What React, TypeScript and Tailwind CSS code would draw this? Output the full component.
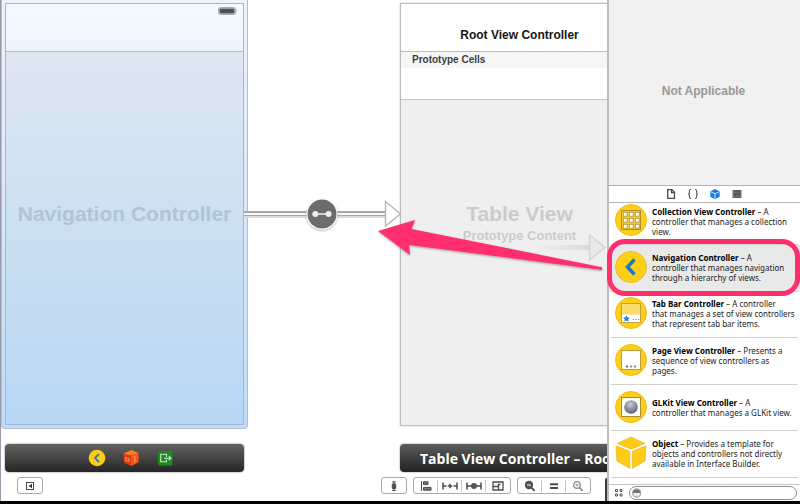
import React from 'react';

interface LibraryItem {
  id: string;
  title: string;
  description: string;
  icon: React.ReactNode;
}

const Disc: React.FC<{ children: React.ReactNode }> = ({ children }) => (
  <svg viewBox="0 0 32 32" className="size-8" aria-hidden="true">
    <circle cx="16" cy="16" r="15.5" fill="#fdd017" stroke="#eebb22" />
    {children}
  </svg>
);

const CollectionIcon = () => (
  <Disc>
    <rect x="6.5" y="6.5" width="19" height="19" fill="#e9c63c" stroke="#b08f2c" />
    {[8, 14, 20].map((y) =>
      [8, 14, 20].map((x) => (
        <rect key={`${x}-${y}`} x={x + 0.3} y={y + 0.3} width="3.8" height="3.8" fill="#fff" stroke="#a3862f" strokeWidth="0.6" />
      ))
    )}
  </Disc>
);

const NavigationIcon = () => (
  <Disc>
    <path d="M19.5 8.5 L12.5 16 L19.5 23.5" fill="none" stroke="#1f74d0" strokeWidth="3.4" />
  </Disc>
);

const TabBarIcon = () => (
  <Disc>
    <rect x="6.5" y="6.5" width="19" height="19" fill="#fff" stroke="#c2a13a" />
    <rect x="7" y="7" width="18" height="10.5" fill="#f9dc6c" />
    <path d="M11.5 18.3 l1.1 2.1 2.3 0.3 -1.7 1.6 0.5 2.3 -2.2 -1.1 -2.2 1.1 0.5 -2.3 -1.7 -1.6 2.3 -0.3z" fill="#1a7fe8" />
    <path d="M17.5 22.5h1.4M20.2 22.5h1.4M22.9 22.5h1.4" stroke="#999" strokeWidth="1.2" />
  </Disc>
);

const PageIcon = () => (
  <Disc>
    <rect x="6.5" y="6.5" width="19" height="19" fill="#fff" stroke="#b99a3c" />
    <circle cx="12" cy="22.5" r="1.2" fill="#777" />
    <circle cx="16" cy="22.5" r="1.2" fill="#999" />
    <circle cx="20" cy="22.5" r="1.2" fill="#999" />
  </Disc>
);

const GLKitIcon = () => (
  <Disc>
    <defs>
      <radialGradient id="ball" cx="0.45" cy="0.3" r="0.7">
        <stop offset="0" stopColor="#c9cbd8" />
        <stop offset="1" stopColor="#5d5f70" />
      </radialGradient>
    </defs>
    <rect x="6.5" y="6.5" width="19" height="19" fill="#fff" stroke="#a98a35" />
    <circle cx="16" cy="16" r="6.8" fill="url(#ball)" />
  </Disc>
);

const ObjectIcon = () => (
  <svg viewBox="0 0 32 34" className="h-[34px] w-8" aria-hidden="true">
    <g fill="#fdcc16" stroke="#eab41c" strokeWidth="0.6">
      <path d="M16 1 L30 7.5 L16.2 13.2 L2 7.5z" />
      <path d="M1 9.8 L14.8 15.2 L14.8 32.4 L1.8 25z" />
      <path d="M31 9.8 L17.2 15.2 L17.2 32.4 L30.2 25z" />
    </g>
  </svg>
);

const LIBRARY: LibraryItem[] = [
  { id: 'navigation', title: 'Navigation Controller', description: 'A\ncontroller that manages navigation\nthrough a hierarchy of views.', icon: <NavigationIcon /> },
  { id: 'tabbar', title: 'Tab Bar Controller', description: 'A controller\nthat manages a set of view controllers\nthat represent tab bar items.', icon: <TabBarIcon /> },
  { id: 'page', title: 'Page View Controller', description: 'Presents a\nsequence of view controllers as\npages.', icon: <PageIcon /> },
  { id: 'glkit', title: 'GLKit View Controller', description: 'A\ncontroller that manages a GLKit view.', icon: <GLKitIcon /> },
  { id: 'object', title: 'Object', description: 'Provides a template for\nobjects and controllers not directly\navailable in Interface Builder.', icon: <ObjectIcon /> },
];

const ItemText: React.FC<{ title: string; description: string }> = ({ title, description }) => (
  <p className="flex-1 text-[8px] leading-[10px] whitespace-pre-line text-[#1c1c1c]">
    <b className="text-black">{title}</b> – {description}
  </p>
);

const LibraryRow: React.FC<{ item: LibraryItem; selected?: boolean }> = ({ item, selected }) => (
  <li className={`flex min-h-0 flex-1 px-[2px] ${selected ? 'bg-[#e9e9e9]' : ''}`}>
    <div className="flex flex-1 items-center gap-[5px] border-b border-[#d2d2d2] pl-1">
      <span className="shrink-0 pb-[2px]">{item.icon}</span>
      <ItemText title={item.title} description={item.description} />
    </div>
  </li>
);

const Inspector = () => (
  <aside className="flex w-[193px] shrink-0 flex-col border-l-2 border-[#bdbdbd] bg-white font-['Noto_Sans',sans-serif]">
    <div className="flex h-[185px] shrink-0 items-center justify-center bg-[#f0f0f0] pr-[2px] pb-1">
      <p className="font-['Liberation_Sans',sans-serif] text-[12px] font-bold text-[#989898]">Not Applicable</p>
    </div>

    <nav className="flex h-[18px] shrink-0 items-center justify-center gap-[10px] border-y border-[#b4b4b4] pr-[2px]">
      <button type="button" aria-label="File templates">
        <svg viewBox="0 0 12 12" className="size-3"><path d="M2.7 1.7h4.2l2.6 2.6v6h-6.8zM6.5 1.7v3h3" fill="none" stroke="#4a4a4a" strokeWidth="1.3" /></svg>
      </button>
      <button type="button" aria-label="Code snippets">
        <svg viewBox="0 0 12 12" className="size-3"><path d="M4 1.5q-1.6 0-1.6 1.5v1.6q0 1.2-1.2 1.4q1.2 0.2 1.2 1.4v1.6q0 1.5 1.6 1.5M8 1.5q1.6 0 1.6 1.5v1.6q0 1.2 1.2 1.4q-1.2 0.2-1.2 1.4v1.6q0 1.5-1.6 1.5" fill="none" stroke="#555" strokeWidth="1.1" /></svg>
      </button>
      <button type="button" aria-label="Objects">
        <svg viewBox="0 0 12 12" className="size-3"><path d="M6 1 L10.7 3.2 L10.7 8.8 L6 11.2 L1.3 8.8 L1.3 3.2z" fill="#1b7fe0" /><path d="M1.5 3.6 L6 5.7 L10.5 3.6M6 5.7V11" fill="none" stroke="#d9ebff" strokeWidth="0.9" /></svg>
      </button>
      <button type="button" aria-label="Media">
        <svg viewBox="0 0 12 12" className="size-3"><path d="M1.5 2h9v8h-9z" fill="#555" /><path d="M1 3h1.6M1 5h1.6M1 7h1.6M1 9h1.6M9.4 3H11M9.4 5H11M9.4 7H11M9.4 9H11" stroke="#ccc" strokeWidth="0.7" /><path d="M3 4.2h6M3 8h6" stroke="#888" strokeWidth="0.7" /></svg>
      </button>
    </nav>

    <ul className="flex min-h-0 flex-1 flex-col">
      <li className="flex h-[42px] shrink-0 px-[2px]">
        <div className="flex flex-1 items-start gap-[5px] border-b border-[#d2d2d2] pt-px pl-1">
          <span className="shrink-0"><CollectionIcon /></span>
          <div className="flex-1 pt-[3px]">
            <ItemText title="Collection View Controller" description={'A\ncontroller that manages a collection\nview.'} />
          </div>
        </div>
      </li>
      {LIBRARY.map((item) => (
        <LibraryRow key={item.id} item={item} selected={item.id === 'navigation'} />
      ))}
    </ul>

    <div className="mt-[6px] flex h-[17px] shrink-0 items-center gap-[5px] border-t border-[#c4c4c4] pr-[3px] pl-[5px]">
      <button type="button" aria-label="Icon view">
        <svg viewBox="0 0 10 10" className="size-[10px]"><path d="M1.5 1.5h2v2h-2zM6 1.5h2v2h-2zM1.5 6h2v2h-2zM6 6h2v2h-2z" fill="none" stroke="#555" /></svg>
      </button>
      <label className="flex h-[14px] flex-1 items-center rounded-full border border-[#8f8f8f] pl-[2px]">
        <svg viewBox="0 0 10 10" className="size-[10px]" aria-hidden="true">
          <circle cx="5" cy="5" r="4.3" fill="#eee" stroke="#8c8c8c" />
          <path d="M1 5a4 4 0 0 1 8 0z" fill="#777" />
        </svg>
        <input type="text" aria-label="Filter objects" className="h-3 w-full min-w-0 bg-transparent text-[8px] outline-none" />
      </label>
    </div>
  </aside>
);

const NavigationScene = () => (
  <section className="flex w-[247px] shrink-0 flex-col">
    <div className="flex h-[429px] flex-col rounded-b-sm border-x border-b border-[#a9bfdc] bg-gradient-to-b from-[#edf4fd] to-[#c0dcf8] px-[3px] pt-[3px] pb-[3px]">
      <div className="flex flex-1 flex-col border border-[#a3b8cf]">
        <div className="flex h-12 justify-end border-b border-[#b0bccb] bg-gradient-to-b from-[#f5f9ff] to-[#edf6ff] pt-[3px] pr-[5px]">
          <svg viewBox="0 0 20 8" className="h-2 w-5" aria-hidden="true">
            <rect x="0.5" y="0.5" width="17" height="7" rx="1.8" fill="#e8edf4" stroke="#a5abb3" />
            <rect x="1.5" y="1.5" width="15" height="5" rx="0.8" fill="#4c535b" />
            <path d="M18.5 2.5q1.2 1.5 0 3z" fill="#777f88" />
          </svg>
        </div>
        <div className="flex flex-1 justify-center bg-gradient-to-b from-[#dfe7f0] via-[#cbdff1] to-[#b7d7f6] pt-[149px]">
          <h2 className="text-[21px] leading-[26px] font-bold whitespace-nowrap text-[#b0c4d6]">Navigation Controller</h2>
        </div>
      </div>
    </div>
    <div className="mx-1 mt-[15px] flex h-7 items-center justify-center gap-4 rounded bg-gradient-to-b from-[#646464] to-[#262626] pl-3 shadow-[0_0_1px_1px_#d5d0d0]">
      <svg viewBox="0 0 18 18" className="size-[18px]"><circle cx="9" cy="9" r="8.3" fill="#fdcc16" /><path d="M11 4.8L7 9l4 4.2" fill="none" stroke="#3a76a8" strokeWidth="1.9" /></svg>
      <svg viewBox="0 0 18 18" className="size-[18px]"><path d="M1.5 4.5L9.5 1l7 3v9L9 17l-7-3.5z" fill="#dd3a12" /><path d="M1.5 4.5L9.5 1l7 3L9 6.5z" fill="#f58226" /><path d="M9 6.5l7.5-2.5v9L9 17z" fill="#ef561c" /><path d="M3.5 8.5l3.5 1v3l-3.5-1.2zM11 7.5l2-0.7v7" fill="none" stroke="#f5a884" strokeWidth="0.8" /></svg>
      <svg viewBox="0 0 18 18" className="size-[18px]"><rect x="2" y="2" width="14.5" height="14.5" rx="1.5" fill="#1c8a1c" /><path d="M10.5 8V5.2H4.7v7.6h5.8V10.5M8 9.2h7M12.8 7l2.2 2.2-2.2 2.2" fill="none" stroke="#cdeccb" strokeWidth="1.1" /></svg>
    </div>
  </section>
);

const TableScene = () => (
  <section className="flex w-[239px] shrink-0 flex-col pt-[3px]">
    <div className="flex h-[423px] flex-col border border-[#bcbcbc] bg-[#efefef] shadow-[0_0_2px_#ccc]">
      <div className="h-12 border-b border-[#bcbcbc] bg-white pt-[22px] text-center">
        <h2 className="text-[12px] leading-[18px] font-bold text-[#161616]">Root View Controller</h2>
      </div>
      <p className="h-4 bg-[#f6f6f6] pl-[11px] text-[10px] leading-4 font-bold text-[#3d3d3d]">Prototype Cells</p>
      <div className="h-8 border-b border-[#c4c4c4] bg-white" />
      <div className="flex flex-1 flex-col items-center pt-[101px] font-bold text-[#cbcbcb]">
        <h3 className="text-[21px] leading-[26px]">Table View</h3>
        <p className="text-[13px] leading-[18px]">Prototype Content</p>
      </div>
    </div>
    <div className="mt-[18px] flex h-7 items-center overflow-hidden rounded bg-gradient-to-b from-[#5e5e5e] to-[#222] pl-5 shadow-[0_0_1px_1px_#dcdcdc]">
      <h2 className="font-['Open_Sans','Noto_Sans',sans-serif] text-[14px] font-bold whitespace-nowrap text-white">Table View Controller – Root View Controller</h2>
    </div>
  </section>
);

const groupClass = 'flex h-[17px] items-center divide-x divide-[#c6c6c6] rounded-[3px] border border-[#a8a8a8] bg-white';

const ToolButton: React.FC<{ label: string; children: React.ReactNode }> = ({ label, children }) => (
  <button type="button" aria-label={label} className="flex h-3 w-6 items-center justify-center">
    <svg viewBox="0 0 16 12" className="h-3 w-4" fill="none" stroke="#4a4a4a" strokeWidth="1.3">{children}</svg>
  </button>
);

const CanvasToolbar = () => (
  <footer className="absolute inset-x-0 bottom-[7px] flex items-center pr-4 pl-4">
    <div className={groupClass}>
      <ToolButton label="Show document outline">
        <rect x="4.5" y="2.5" width="7" height="7" strokeWidth="1" />
        <path d="M10 3.8v4.4L6.5 6z" fill="#333" stroke="none" />
      </ToolButton>
    </div>
    <div className="ml-auto flex gap-[6px]">
      <div className={groupClass}>
        <ToolButton label="Form factor">
          <rect x="5.8" y="3.5" width="4.4" height="5.5" rx="1" fill="#555" stroke="none" />
          <path d="M8 1v10M6.2 2h3.6M6.2 10.4h3.6" strokeWidth="1" />
        </ToolButton>
      </div>
      <div className={groupClass}>
        <ToolButton label="Align">
          <path d="M3.5 1v10" strokeWidth="1" />
          <path d="M5.5 1.8h4.5v2.8h-4.5zM5.5 7.4h7.5v2.8h-7.5z" fill="#777" strokeWidth="1" />
        </ToolButton>
        <ToolButton label="Pin">
          <path d="M1 2.5v7M15 2.5v7M1 6h3.5M11.5 6H15M5.8 6h4.4M8 3.8v4.4" strokeWidth="1.5" />
        </ToolButton>
        <ToolButton label="Resolve issues">
          <path d="M1 2.5v7M15 2.5v7M1 6h14" strokeWidth="1.5" />
          <circle cx="8" cy="6" r="3" fill="#555" stroke="none" />
        </ToolButton>
        <ToolButton label="Resizing behavior">
          <path d="M3 2h10v8h-10zM3 6.5h5.5v3.5M8.5 6.5V4.5h2" />
        </ToolButton>
      </div>
      <div className={groupClass}>
        <ToolButton label="Zoom out">
          <circle cx="7" cy="5" r="3.5" fill="#555" />
          <path d="M9.6 7.8l3 3" strokeWidth="1.8" />
          <path d="M5 5h4" stroke="#fff" strokeWidth="1" />
        </ToolButton>
        <ToolButton label="Actual size">
          <path d="M4 4.2h8M4 8h8" strokeWidth="2" />
        </ToolButton>
        <ToolButton label="Zoom in">
          <g stroke="#8c8c8c">
            <circle cx="7" cy="5" r="3.3" />
            <path d="M9.6 7.8l3 3" strokeWidth="1.8" />
            <path d="M5.4 5h3.2M7 3.4v3.2" strokeWidth="0.9" />
          </g>
        </ToolButton>
      </div>
    </div>
  </footer>
);

// Segue line between the two scenes, plus the faint outgoing one
const Segues = () => (
  <svg viewBox="0 0 608 300" className="pointer-events-none absolute top-0 left-0 h-[300px] w-[608px]" aria-hidden="true">
    <defs>
      <filter id="soft" x="-20%" y="-40%" width="140%" height="200%">
        <feDropShadow dx="0" dy="1" stdDeviation="1" floodColor="#000" floodOpacity="0.35" />
      </filter>
      <linearGradient id="fade" gradientUnits="userSpaceOnUse" x1="530" y1="0" x2="590" y2="0">
        <stop offset="0" stopColor="#dedede" stopOpacity="0" />
        <stop offset="1" stopColor="#d9d9d9" />
      </linearGradient>
    </defs>
    <rect x="243" y="211" width="142" height="5" fill="#a8a8a8" />
    <rect x="243" y="216" width="142" height="2" fill="#dcdcdc" />
    <rect x="243" y="213" width="142" height="2" fill="#f8f8f8" />
    <path d="M384.5 201.5L399.5 214L384.5 226z" fill="#fff" stroke="#b5b5b5" strokeWidth="1.4" />
    <circle cx="321" cy="214" r="15.5" fill="#fff" filter="url(#soft)" />
    <circle cx="321" cy="214" r="14.5" fill="#6c6c6c" />
    <path d="M314 214h13.5" stroke="#eee" strokeWidth="1.6" />
    <circle cx="314.3" cy="214" r="3" fill="#eee" />
    <circle cx="327.5" cy="214" r="3" fill="#eee" />
    <rect x="530" y="245" width="60" height="5" fill="url(#fade)" />
    <path d="M588.5 235L604 247.5L588.5 260z" fill="#e9e9e9" stroke="#d3d3d3" strokeWidth="1.4" />
  </svg>
);

// Pink call-out: arrow from the library row to the canvas
const Annotation = () => (
  <>
    <svg viewBox="0 0 800 504" className="pointer-events-none absolute top-0 left-0 h-[504px] w-[800px]" aria-hidden="true">
      <path d="M378 231L415 220L411.5 229L602 267.2V270L409 245L410 255z" fill="#ff2f6e" filter="url(#soft)" />
    </svg>
    <div className="pointer-events-none absolute top-[239px] right-0 h-[57px] w-[193px] rounded-[18px] border-[5px] border-[#ff2f6e]" />
  </>
);

export default function App() {
  return (
    <div className="relative flex h-screen flex-col overflow-hidden bg-black pb-[3px] font-['Liberation_Sans',sans-serif]">
      <div className="flex min-h-0 flex-1">
        <main className="relative flex min-w-0 flex-1 gap-[152px] overflow-hidden border-l border-[#9a9aa8] bg-white">
          <NavigationScene />
          <TableScene />
          <Segues />
          <CanvasToolbar />
          <span className="absolute right-0 bottom-0 h-[23px] w-[2px] rounded-tl-sm bg-[#3a3a3a]" />
        </main>
        <Inspector />
      </div>
      <Annotation />
    </div>
  );
}
